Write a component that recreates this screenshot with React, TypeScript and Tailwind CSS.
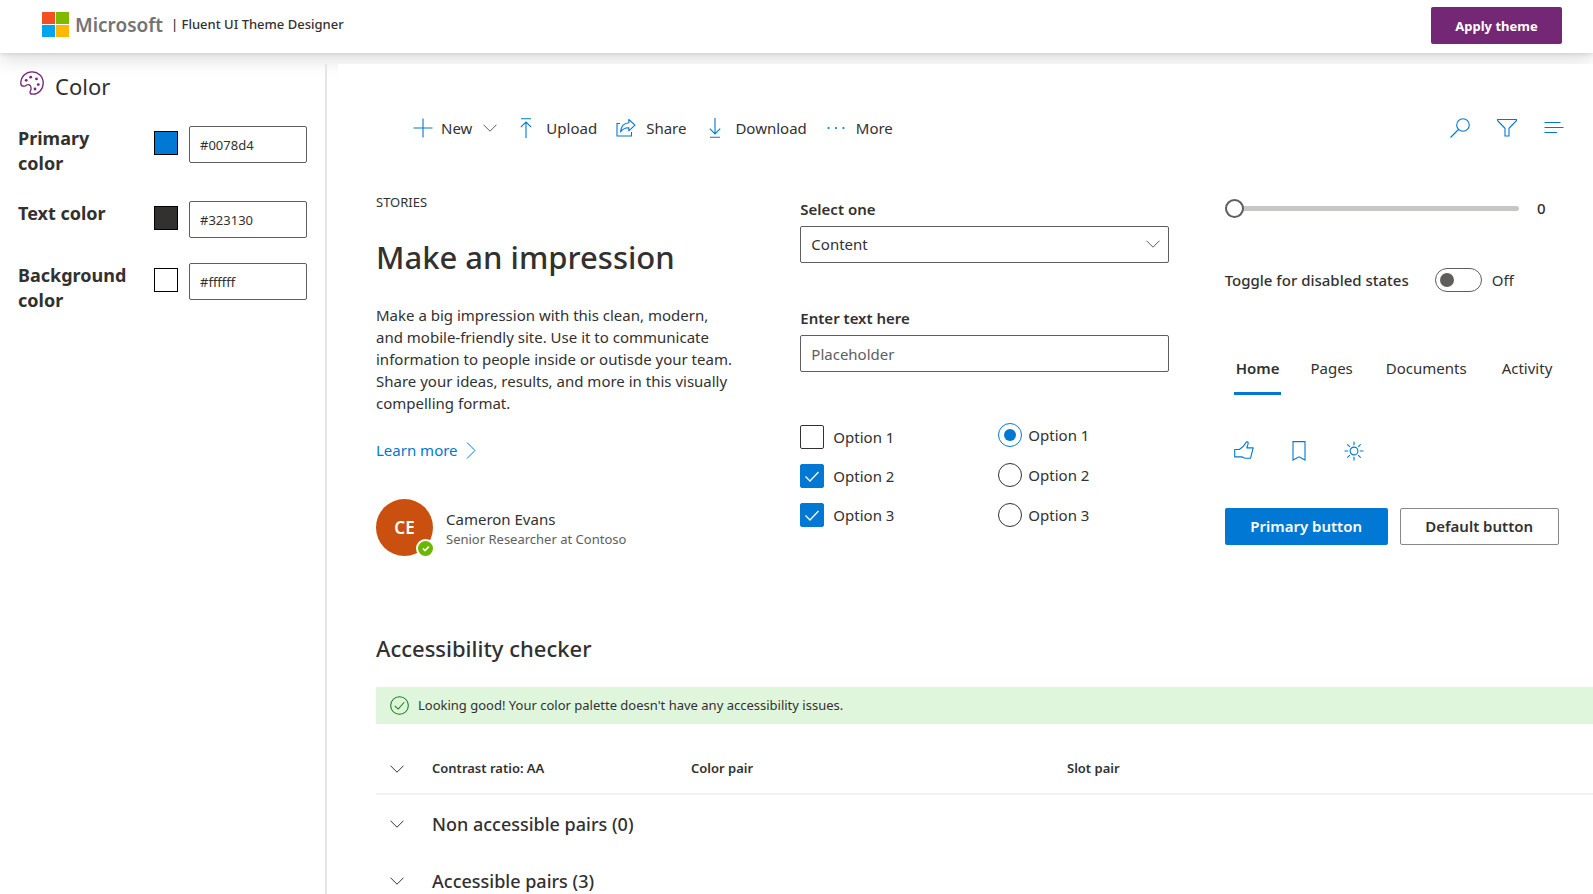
import { useState } from "react";
import type { ReactNode } from "react";

function Icon({ size = 20, className = "", children }: { size?: number; className?: string; children: ReactNode }) {
  return (
    <svg
      width={size}
      height={size}
      viewBox="0 0 20 20"
      fill="none"
      stroke="currentColor"
      strokeWidth="1.1"
      aria-hidden="true"
      className={`shrink-0 ${className}`}
    >
      {children}
    </svg>
  );
}

function Chevron({ className = "" }: { className?: string }) {
  return (
    <svg width="14" height="8" viewBox="0 0 14 8" fill="none" stroke="currentColor" aria-hidden="true" className={className}>
      <path d="M0.5 0.7 7 7.2 13.5 0.7" />
    </svg>
  );
}

function MicrosoftLogo() {
  return (
    <svg width="27" height="26" viewBox="0 0 27 26" aria-hidden="true">
      <rect width="13" height="12" fill="#f25022" />
      <rect x="14" width="13" height="12" fill="#7fba00" />
      <rect y="13" width="13" height="12" fill="#00a4ef" />
      <rect x="14" y="13" width="13" height="12" fill="#ffb900" />
    </svg>
  );
}

function PaletteIcon() {
  return (
    <svg width="24" height="24" viewBox="0 0 24 24" fill="none" stroke="currentColor" strokeWidth="1.3" aria-hidden="true" className="text-[#742774]">
      <path d="M0.800 12.400C0.800 5.500 6 0.800 12 0.800c6.300 0 11.200 4.800 11.200 11.200 0 6.400-4.700 11.200-10.300 11.200-2.400 0-3.300-.8-2.800-2.200.6-1.600 1.400-2.700.9-4.700-.5-2.300-2.600-3.200-4.400-2.300-.9.500-1.400 1.300-2.900 1.200C1.900 15.100 0.800 14.300 0.800 12.400Z" />
      <g fill="currentColor" stroke="none">
        <circle cx="6.200" cy="9.300" r="1.400" />
        <circle cx="10.700" cy="6.200" r="1.400" />
        <circle cx="16.500" cy="7.900" r="1.400" />
        <circle cx="18.300" cy="13.600" r="1.400" />
        <circle cx="15" cy="18" r="1.400" />
      </g>
    </svg>
  );
}

const colors = [
  { id: "primary", label: "Primary color", value: "#0078d4", swatch: "bg-[#0078d4]" },
  { id: "text", label: "Text color", value: "#323130", swatch: "bg-[#323130]" },
  { id: "background", label: "Background color", value: "#ffffff", swatch: "bg-white" },
];

function Sidebar() {
  return (
    <aside className="w-[327px] shrink-0 border-r-2 border-[#e5e5e5] pr-[18px] pl-[18px]">
      <div className="flex h-[62px] items-start gap-[11px] pt-[7px] pl-[2px]">
        <PaletteIcon />
        <h2 className="pt-[2px] text-[22px] leading-[26px]">Color</h2>
      </div>
      <div className="flex flex-col gap-[25px]">
        {colors.map((c) => (
          <div key={c.id} className="flex items-start">
            <label htmlFor={c.id} className="w-[117px] text-[18px] leading-[25px] font-bold">
              <span className="block pr-2">{c.label}</span>
            </label>
            <button aria-label={`Pick ${c.label.toLowerCase()}`} className={`mt-[5px] ml-[19px] size-6 shrink-0 border border-black ${c.swatch}`} />
            <input
              id={c.id}
              defaultValue={c.value}
              className="ml-[11px] h-[37px] w-[118px] min-w-0 rounded-[2px] border border-[#605e5c] px-[10px] text-[13px] outline-none"
            />
          </div>
        ))}
      </div>
    </aside>
  );
}

function Command({ label, icon }: { label: string; icon: ReactNode }) {
  return (
    <button className="flex items-center gap-[10px]">
      <span className="text-[#0078d4]">{icon}</span>
      {label}
    </button>
  );
}

function CommandBar() {
  return (
    <div className="flex h-10 items-center pr-[29px] pl-[37px] text-[15px]">
      <div className="flex flex-1 items-center gap-[19px]">
        <button className="flex items-center gap-[8px]">
          <Icon className="text-[#0078d4]">
            <path d="M10 0.500v19M0.500 10h19" />
          </Icon>
          New
          <Chevron className="ml-[3px] text-[#605e5c]" />
        </button>
        <Command
          label="Upload"
          icon={
            <Icon>
              <path d="M5 0.800h10M10 20V4M4.800 9.200 10 4l5.200 5.200" />
            </Icon>
          }
        />
        <Command
          label="Share"
          icon={
            <Icon>
              <path d="M4 5.500H1v12.500h14.500v-4" />
              <path d="M12.800 1.500 19 7.200l-6.200 5.600V9.700C9 9.600 6.500 11 4.500 14c.4-5 3.500-8.800 8.300-9.300V1.500Z" strokeLinejoin="round" />
            </Icon>
          }
        />
        <Command
          label="Download"
          icon={
            <Icon>
              <path d="M5 19.300h10M10 0v15.800M4.800 10.700l5.200 5.200 5.200-5.200" />
            </Icon>
          }
        />
        <Command
          label="More"
          icon={
            <Icon>
              <g fill="currentColor" stroke="none">
                <circle cx="2.500" cy="10" r="1.100" />
                <circle cx="10" cy="10" r="1.100" />
                <circle cx="17.500" cy="10" r="1.100" />
              </g>
            </Icon>
          }
        />
      </div>
      <div className="flex items-center gap-[27px] text-[#0078d4]">
        <button aria-label="Search">
          <Icon>
            <circle cx="13" cy="7" r="6.300" />
            <path d="M8.500 11.500 0.500 19.500" />
          </Icon>
        </button>
        <button aria-label="Filter">
          <Icon>
            <path d="M0.600 1.500h18.800v1.200L12 10.300V18H8v-7.700L0.600 2.700Z" />
          </Icon>
        </button>
        <button aria-label="Toggle list">
          <Icon>
            <path d="M0.500 4.500h16M0.500 9.500h19M0.500 14.500h12.500" />
          </Icon>
        </button>
      </div>
    </div>
  );
}

function Story() {
  return (
    <section>
      <p className="pt-[6px] text-[13px] leading-5">STORIES</p>
      <h1 className="mt-[23px] text-[31px] leading-[44px] font-medium">Make an impression</h1>
      <p className="mt-[25px] text-[15px] leading-[22px]">
        Make a big impression with this clean, modern,
        <br />
        and mobile-friendly site. Use it to communicate
        <br />
        information to people inside or outisde your team.
        <br />
        Share your ideas, results, and more in this visually
        <br />
        compelling format.
      </p>
      <a href="#" className="mt-[25px] flex items-center gap-[8px] text-[15px] leading-[22px] text-[#0078d4]">
        Learn more
        <svg width="10" height="17" viewBox="0 0 10 17" fill="none" stroke="currentColor" aria-hidden="true">
          <path d="M1 0.500 9 8.500 1 16.500" />
        </svg>
      </a>
      <div className="mt-[38px] flex items-center gap-[13px]">
        <div className="relative flex size-[57px] items-center justify-center rounded-full bg-[#ca5010] text-[17px] font-semibold text-white">
          CE
          <span className="absolute -right-[2px] -bottom-[2px] flex size-[19px] items-center justify-center rounded-full border-2 border-white bg-[#6bb700]">
            <svg width="8" height="7" viewBox="0 0 8 7" fill="none" stroke="white" strokeWidth="1.700" aria-hidden="true">
              <path d="M1 3.500 3 5.500 7 1.500" />
            </svg>
          </span>
        </div>
        <div>
          <p className="text-[15px] leading-[22px]">Cameron Evans</p>
          <p className="text-[13px] leading-[18px] text-[#605e5c]">Senior Researcher at Contoso</p>
        </div>
      </div>
    </section>
  );
}

const options = ["Option 1", "Option 2", "Option 3"];

function Fields() {
  return (
    <section className="pt-[11px] text-[15px]">
      <label htmlFor="content" className="block leading-6 font-semibold">
        Select one
      </label>
      <div className="relative mt-[5px]">
        <select id="content" className="h-[37px] w-full appearance-none rounded-[2px] border border-[#605e5c] bg-white px-[10px] outline-none">
          <option>Content</option>
        </select>
        <Chevron className="pointer-events-none absolute top-[14px] right-[9px] text-[#605e5c]" />
      </div>
      <label htmlFor="entry" className="mt-[43px] block leading-6 font-semibold">
        Enter text here
      </label>
      <input
        id="entry"
        placeholder="Placeholder"
        className="mt-[5px] block h-[37px] w-full rounded-[2px] border border-[#605e5c] px-[10px] outline-none placeholder:text-[#605e5c]"
      />
      <div className="mt-[51px] grid grid-cols-[198px_1fr]">
        <div className="flex flex-col gap-[15px] pt-[2px]">
          {options.map((o, i) => (
            <label key={o} className="flex h-6 items-center gap-[9px]">
              <span className="relative size-6">
                <input
                  type="checkbox"
                  defaultChecked={i > 0}
                  className="block size-6 appearance-none rounded-[2px] border border-[#323130] checked:border-[#0078d4] checked:bg-[#0078d4]"
                />
                <svg width="14" height="11" viewBox="0 0 14 11" fill="none" stroke="white" strokeWidth="1.300" aria-hidden="true" className="pointer-events-none absolute top-[7px] left-[5px]">
                  <path d="M0.500 5.500 5 10 13.500 1" />
                </svg>
              </span>
              {o}
            </label>
          ))}
        </div>
        <div className="flex flex-col gap-4">
          {options.map((o, i) => (
            <label key={o} className="flex h-6 items-center gap-[6px]">
              <input
                type="radio"
                name="option"
                defaultChecked={i === 0}
                className="block size-6 appearance-none rounded-full border border-[#323130] checked:border-[#0078d4] checked:bg-[#0078d4] checked:bg-clip-content checked:p-[5px]"
              />
              {o}
            </label>
          ))}
        </div>
      </div>
    </section>
  );
}

function Controls() {
  const [value, setValue] = useState(0);
  const [on, setOn] = useState(false);
  return (
    <section className="pt-[10px] pr-[33px] text-[15px]">
      <div className="flex h-6 items-center">
        <input
          type="range"
          aria-label="Amount"
          min={0}
          max={10}
          value={value}
          onChange={(e) => setValue(Number(e.target.value))}
          className="h-[19px] min-w-0 flex-1 appearance-none bg-transparent [&::-webkit-slider-runnable-track]:h-[5px] [&::-webkit-slider-runnable-track]:rounded-full [&::-webkit-slider-runnable-track]:bg-[#c8c6c4] [&::-webkit-slider-thumb]:-mt-[7px] [&::-webkit-slider-thumb]:size-[19px] [&::-webkit-slider-thumb]:appearance-none [&::-webkit-slider-thumb]:rounded-full [&::-webkit-slider-thumb]:border-2 [&::-webkit-slider-thumb]:border-[#605e5c] [&::-webkit-slider-thumb]:bg-white"
        />
        <output className="w-[41px] pl-[18px] font-medium">{value}</output>
      </div>
      <div className="mt-[48px] flex h-6 items-center">
        <label htmlFor="toggle" className="font-medium">
          Toggle for disabled states
        </label>
        <button
          id="toggle"
          role="switch"
          aria-checked={on}
          onClick={() => setOn(!on)}
          className="ml-[26px] flex h-6 w-[47px] shrink-0 items-center rounded-full border border-[#605e5c] px-1"
        >
          <span className={`size-[14px] rounded-full bg-[#605e5c] ${on ? "ml-auto" : ""}`} />
        </button>
        <span className="ml-[10px]">{on ? "On" : "Off"}</span>
      </div>
      <div role="tablist" className="mt-[52px] flex gap-[29px] pl-[9px]">
        <button role="tab" aria-selected="true" className="h-[51px] border-b-3 border-[#0078d4] px-[2px] font-semibold">
          Home
        </button>
        <button role="tab" className="h-[49px]">Pages</button>
        <button role="tab" className="h-[49px] pl-1">Documents</button>
        <button role="tab" className="h-[49px] pl-[6px]">Activity</button>
      </div>
      <div className="mt-[46px] flex h-5 items-center gap-[35px] pl-[9px] text-[#0078d4]">
        <button aria-label="Like">
          <Icon>
            <path d="M0.700 8.500h4.600c3-1.700 5.200-4.200 6.700-7.100.5-.9 2.300-.7 2.200.6-.1 1.700-.9 3.300-1.400 4.900h6.400l-2.600 10.300h-5.400c-1.300 0-2.200-1.300-3.500-1.300H0.700Z" strokeLinejoin="round" />
          </Icon>
        </button>
        <button aria-label="Bookmark">
          <Icon>
            <path d="M4 0.600h12v18.400l-6-3.200-6 3.200Z" />
          </Icon>
        </button>
        <button aria-label="Brightness">
          <Icon>
            <circle cx="10" cy="10" r="3.900" />
            <path d="M10 0.500v3.700M10 15.800v3.700M0.500 10h3.700M15.800 10h3.700M3.300 3.300l2.600 2.600M14.100 14.100l2.600 2.600M16.700 3.300l-2.600 2.600M5.900 14.100l-2.600 2.600" />
          </Icon>
        </button>
      </div>
      <div className="mt-[47px] flex gap-3 font-semibold">
        <button className="h-[37px] w-[163px] rounded-[2px] bg-[#0078d4] text-white">Primary button</button>
        <button className="h-[37px] w-[159px] rounded-[2px] border border-[#8a8886]">Default button</button>
      </div>
    </section>
  );
}

function AccessibilityChecker() {
  return (
    <section className="mt-[76px]">
      <h2 className="text-[22px] leading-[32px] font-medium">Accessibility checker</h2>
      <div role="status" className="mt-[23px] flex h-[37px] items-center gap-[9px] bg-[#dff6dd] pl-[14px] text-[13px]">
        <Icon size={19} className="text-[#107c10]">
          <circle cx="10" cy="10" r="9.300" />
          <path d="M5 10.300 8.600 13.800 15 6.600" />
        </Icon>
        Looking good! Your color palette doesn't have any accessibility issues.
      </div>
      <table className="mt-[20px] w-full table-fixed text-left">
        <thead className="border-b-2 border-[#f3f2f1] text-[13px]">
          <tr className="h-[50px]">
            <th className="w-14 pl-[14px]">
              <button aria-label="Toggle all groups" className="block">
                <Chevron />
              </button>
            </th>
            <th className="w-[259px] font-semibold">Contrast ratio: AA</th>
            <th className="w-[376px] font-semibold">Color pair</th>
            <th className="font-semibold">Slot pair</th>
          </tr>
        </thead>
        <tbody className="text-[18px] leading-6">
          {["Non accessible pairs (0)", "Accessible pairs (3)"].map((g) => (
            <tr key={g} className="h-[58px]">
              <td className="pl-[14px]">
                <button aria-label={`Toggle ${g}`} className="block">
                  <Chevron />
                </button>
              </td>
              <th colSpan={3} className="font-medium">
                {g}
              </th>
            </tr>
          ))}
        </tbody>
      </table>
    </section>
  );
}

export default function App() {
  return (
    <div className="flex min-h-screen flex-col bg-white font-['Noto_Sans','Open_Sans',sans-serif] text-[#323130]">
      <header className="flex h-[53px] shrink-0 items-center bg-white pr-[31px] pb-[3px] pl-[42px] shadow-[0_7px_17px_rgba(0,0,0,0.13),0_1px_4px_rgba(0,0,0,0.11)]">
        <MicrosoftLogo />
        <span className="ml-[6px] text-[19px] leading-6 font-semibold text-[#737373]">Microsoft</span>
        <span className="ml-[8px] flex-1 text-[13px] font-medium">| Fluent UI Theme Designer</span>
        <button className="h-[37px] w-[131px] rounded-[2px] bg-[#742774] pt-[3px] text-[13px] font-bold text-white">Apply theme</button>
      </header>
      <div className="flex flex-1 pt-[11px]">
        <Sidebar />
        <main className="ml-[11px] min-w-0 flex-1 bg-white pt-[44px] pl-[38px]">
          <CommandBar />
          <div className="mt-[38px] grid grid-cols-3 gap-14">
            <Story />
            <Fields />
            <Controls />
          </div>
          <AccessibilityChecker />
        </main>
      </div>
    </div>
  );
}
